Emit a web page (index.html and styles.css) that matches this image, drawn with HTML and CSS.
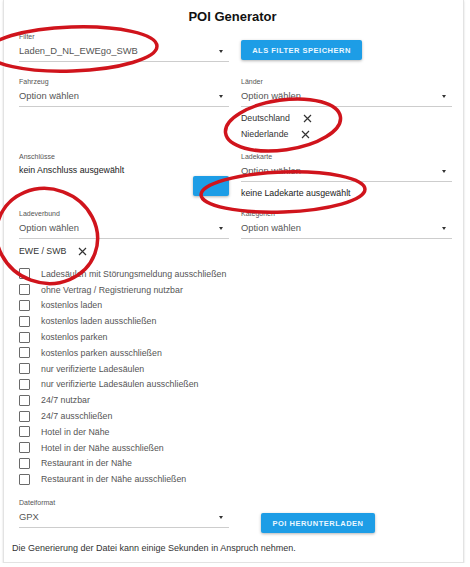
FILE: index.html
```html
<!DOCTYPE html>
<html lang="de">
<head>
    <meta charset="UTF-8">
    <meta name="viewport" content="width=device-width, initial-scale=1.0">
    <title>POI Generator</title>
    <link rel="stylesheet" href="styles.css">
</head>
<body>
    <div class="card">
        <h1 class="title">POI Generator</h1>

        <div class="form">
            <div class="row row-filter">
                <div class="col">
                    <div class="field-label">Filter</div>
                    <div class="select"><span class="select-value">Laden_D_NL_EWEgo_SWB</span><span class="caret"></span></div>
                </div>
                <div class="col">
                    <button class="btn btn-save">ALS FILTER SPEICHERN</button>
                </div>
            </div>

            <div class="row row-vehicle">
                <div class="col">
                    <div class="field-label">Fahrzeug</div>
                    <div class="select"><span class="select-value">Option wählen</span><span class="caret"></span></div>
                </div>
                <div class="col">
                    <div class="field-label">Länder</div>
                    <div class="select"><span class="select-value">Option wählen</span><span class="caret"></span></div>
                    <div class="chips">
                        <div class="chip">Deutschland <svg class="chip-x" width="9" height="9" viewBox="0 0 9 9"><path d="M1 1 L8 8 M8 1 L1 8"/></svg></div>
                        <div class="chip">Niederlande <svg class="chip-x" width="9" height="9" viewBox="0 0 9 9"><path d="M1 1 L8 8 M8 1 L1 8"/></svg></div>
                    </div>
                </div>
            </div>

            <div class="row row-plugs">
                <div class="col col-plugs">
                    <div class="field-label">Anschlüsse</div>
                    <div class="plain-text plugs-text">kein Anschluss ausgewählt</div>
                    <button class="btn btn-small"></button>
                </div>
                <div class="col">
                    <div class="field-label">Ladekarte</div>
                    <div class="select"><span class="select-value">Option wählen</span><span class="caret"></span></div>
                    <div class="plain-text card-text">keine Ladekarte ausgewählt</div>
                </div>
            </div>

            <div class="row row-network">
                <div class="col">
                    <div class="field-label">Ladeverbund</div>
                    <div class="select"><span class="select-value">Option wählen</span><span class="caret"></span></div>
                    <div class="chips chips-network">
                        <div class="chip chip-wide">EWE / SWB <svg class="chip-x" width="9" height="9" viewBox="0 0 9 9"><path d="M1 1 L8 8 M8 1 L1 8"/></svg></div>
                    </div>
                </div>
                <div class="col">
                    <div class="field-label">Kategorien</div>
                    <div class="select"><span class="select-value">Option wählen</span><span class="caret"></span></div>
                </div>
            </div>

            <ul class="checklist">
                <li><span class="box"></span>Ladesäulen mit Störungsmeldung ausschließen</li>
                <li><span class="box"></span>ohne Vertrag / Registrierung nutzbar</li>
                <li><span class="box"></span>kostenlos laden</li>
                <li><span class="box"></span>kostenlos laden ausschließen</li>
                <li><span class="box"></span>kostenlos parken</li>
                <li><span class="box"></span>kostenlos parken ausschließen</li>
                <li><span class="box"></span>nur verifizierte Ladesäulen</li>
                <li><span class="box"></span>nur verifizierte Ladesäulen ausschließen</li>
                <li><span class="box"></span>24/7 nutzbar</li>
                <li><span class="box"></span>24/7 ausschließen</li>
                <li><span class="box"></span>Hotel in der Nähe</li>
                <li><span class="box"></span>Hotel in der Nähe ausschließen</li>
                <li><span class="box"></span>Restaurant in der Nähe</li>
                <li><span class="box"></span>Restaurant in der Nähe ausschließen</li>
            </ul>

            <div class="row row-format">
                <div class="col">
                    <div class="field-label">Dateiformat</div>
                    <div class="select"><span class="select-value">GPX</span><span class="caret"></span></div>
                </div>
                <button class="btn btn-download">POI HERUNTERLADEN</button>
            </div>
        </div>

        <p class="note">Die Generierung der Datei kann einige Sekunden in Anspruch nehmen.</p>
    </div>

    <!-- red marker circles drawn over the screenshot -->
    <svg class="marks" width="470" height="567" viewBox="0 0 470 567">
        <ellipse cx="72" cy="49" rx="85" ry="22" transform="rotate(-2 72 49)"/>
        <ellipse cx="283" cy="125" rx="58" ry="25" transform="rotate(-8 283 125)"/>
        <ellipse cx="283" cy="192" rx="82" ry="20" transform="rotate(-2 283 192)"/>
        <ellipse cx="47" cy="236" rx="51" ry="47" transform="rotate(20 47 236)"/>
    </svg>
</body>
</html>
```

FILE: styles.css
```css
body {
    margin: 0;
    position: relative;
    font-family: "Liberation Sans", Arial, sans-serif;
    background-color: #fff;
    color: #333;
}

.card {
    box-sizing: border-box;
    width: 461px;
    margin-left: 3px;
    padding: 9px 10px 7px 8px;
    border: 1px solid #e3e3e3;
    border-top: none;
    box-shadow: 0 1px 2px rgba(0, 0, 0, 0.15);
    background-color: #fff;
}

.title {
    margin: 0;
    font-size: 13px;
    line-height: 16px;
    font-weight: bold;
    text-align: center;
    color: #111;
}

.form {
    padding-left: 7px;
}

.row {
    display: flex;
    gap: 12px;
}

.col {
    width: 210px;
    display: flex;
    flex-direction: column;
}

.col + .col {
    width: 211px;
}

.row-filter { margin-top: 8px; }
.row-vehicle { margin-top: 16px; }
.row-plugs { margin-top: 11px; }
.row-network { margin-top: 10px; }
.row-format { margin-top: 12px; gap: 32px; }

.field-label {
    font-size: 7px;
    line-height: 8px;
    color: #555;
}

.select {
    display: flex;
    align-items: center;
    justify-content: space-between;
    margin-top: 2px;
    padding: 0 6px 2px 0;
    border-bottom: 1px solid #cdcdcd;
}

.select-value {
    font-size: 9.4px;
    line-height: 16px;
    color: #555;
}

.caret {
    width: 0;
    height: 0;
    margin-top: 1px;
    border-left: 2.5px solid transparent;
    border-right: 2.5px solid transparent;
    border-top: 3px solid #333;
}

.btn {
    padding: 0;
    height: 20px;
    border: none;
    border-radius: 2px;
    background-color: #1d9de6;
    color: #eaf7ff;
    font-family: "Liberation Sans", Arial, sans-serif;
    font-size: 7.5px;
    font-weight: bold;
    letter-spacing: 0.5px;
    box-shadow: 0 1px 3px rgba(0, 0, 0, 0.3);
}

.btn-save {
    width: 121px;
    margin-top: 7px;
}

.btn-small {
    width: 36px;
    align-self: flex-end;
}

.btn-download {
    width: 114px;
    margin-top: 14px;
}

.chips {
    margin-top: 3px;
}

.chips-network {
    margin-top: 4px;
}

.chip {
    display: flex;
    align-items: center;
    font-size: 8.8px;
    line-height: 16px;
    color: #333;
}

.chip-x {
    margin-left: 13px;
    stroke: #333;
    stroke-width: 1.2;
    fill: none;
}

.chip-wide .chip-x {
    margin-left: 12px;
}

.plain-text {
    font-size: 8.8px;
    color: #222;
}

.plugs-text {
    margin-top: 3px;
    line-height: 12px;
}

.card-text {
    margin-top: 4px;
    line-height: 14px;
}

.checklist {
    list-style: none;
    margin: 7px 0 0;
    padding: 0;
}

.checklist li {
    display: flex;
    align-items: center;
    height: 15.8px;
    font-size: 8.8px;
    color: #555;
}

.checklist .box {
    box-sizing: border-box;
    width: 11px;
    height: 11px;
    margin-right: 11px;
    border: 1px solid #6a6a6a;
    border-radius: 1px;
}

.note {
    margin: 8px 0 0;
    font-size: 9px;
    line-height: 14px;
    color: #333;
}

.marks {
    position: absolute;
    top: 0;
    left: 0;
    pointer-events: none;
}

.marks ellipse {
    fill: none;
    stroke: #d0141c;
    stroke-width: 3.5;
}
```
